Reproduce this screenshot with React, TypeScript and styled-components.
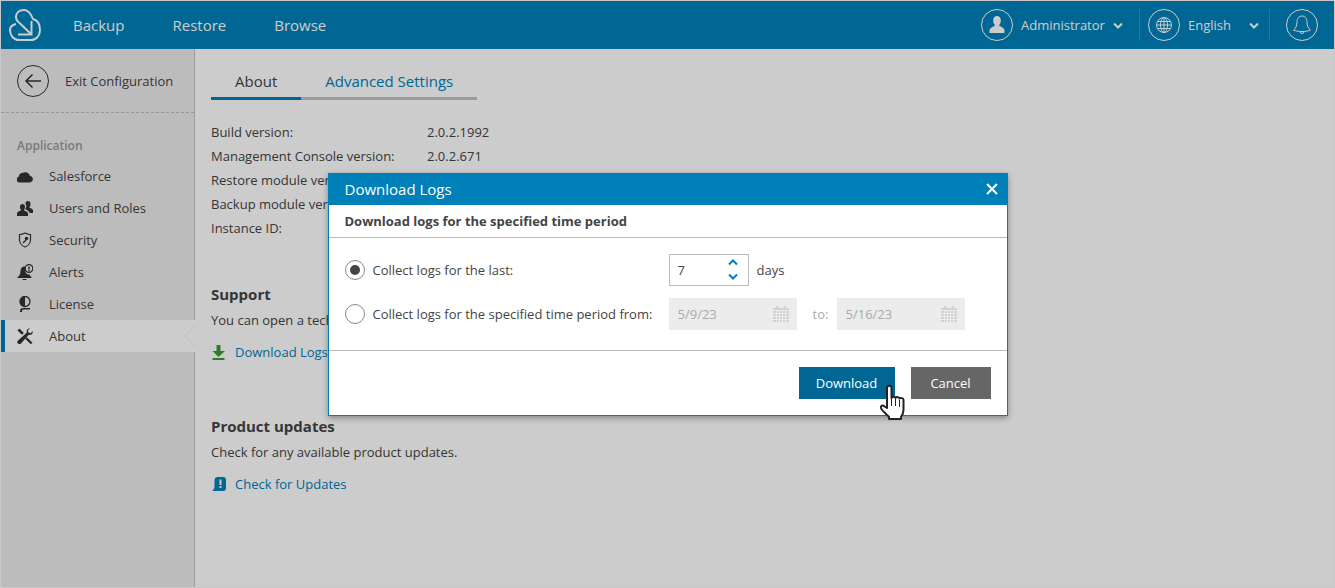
import styled, { createGlobalStyle } from 'styled-components';

const GlobalStyle = createGlobalStyle`
  html, body {
    margin: 0;
    height: 100%;
  }
  body {
    font-family: "Open Sans", "Liberation Sans", sans-serif;
    font-size: 13px;
    color: #444;
    background: #fff;
  }
  #root {
    height: 100%;
  }
`;

const Page = styled.div`
  position: relative;
  box-sizing: border-box;
  height: 100vh;
  border: 1px solid #c8c8c8;
  display: flex;
  flex-direction: column;
  overflow: hidden;
`;

const Header = styled.header`
  flex: none;
  height: 48px;
  background: #0080b9;
  display: flex;
  align-items: center;
  color: #fff;
  padding: 0 16px 0 8px;
`;

const Logo = styled.svg`
  width: 32px;
  height: 32px;
  margin-right: 32px;
`;

const NavLink = styled.a`
  font-size: 15px;
  margin-right: 48px;
`;

const HeaderRight = styled.div`
  margin-left: auto;
  display: flex;
  align-items: center;
  height: 32px;
`;

const HeaderCircle = styled.span<{ $flush?: boolean }>`
  width: 30px;
  height: 30px;
  border: 1px solid #fff;
  border-radius: 50%;
  display: flex;
  align-items: center;
  justify-content: center;
  margin-right: ${(p) => (p.$flush ? 0 : 8)}px;
`;

const HeaderText = styled.span<{ $width: number }>`
  width: ${(p) => p.$width}px;
  font-size: 13px;
`;

const Separator = styled.span<{ $left: number; $right: number }>`
  width: 1px;
  height: 32px;
  background: #2f97c6;
  margin: 0 ${(p) => p.$right}px 0 ${(p) => p.$left}px;
`;

const Body = styled.div`
  flex: 1;
  display: flex;
  min-height: 0;
`;

const Sidebar = styled.aside`
  flex: none;
  box-sizing: border-box;
  width: 194px;
  background: #ececec;
  border-right: 1px solid #c4c4c4;
`;

const ExitRow = styled.div`
  box-sizing: border-box;
  height: 64px;
  display: flex;
  align-items: center;
  gap: 16px;
  padding-left: 16px;
  border-bottom: 1px dashed #bbb;
`;

const BackCircle = styled.span`
  width: 30px;
  height: 30px;
  border: 1px solid #333;
  border-radius: 50%;
  display: flex;
  align-items: center;
  justify-content: center;
`;

const GroupLabel = styled.div`
  font-weight: 600;
  font-size: 12px;
  color: #999;
  padding: 23px 0 0 16px;
  height: 24px;
  line-height: 20px;
`;

const MenuList = styled.div`
  display: flex;
  flex-direction: column;
`;

const MenuItem = styled.div<{ $active?: boolean }>`
  position: relative;
  box-sizing: border-box;
  height: 32px;
  display: flex;
  align-items: center;
  gap: 16px;
  padding-left: ${(p) => (p.$active ? 12 : 16)}px;
  background: ${(p) => (p.$active ? '#fff' : 'transparent')};
  border-left: ${(p) => (p.$active ? '4px solid #0080b9' : 'none')};
  margin-right: ${(p) => (p.$active ? '-1px' : '0')};
`;

const ActiveNotch = styled.svg`
  position: absolute;
  right: 0;
  top: 6px;
  width: 11px;
  height: 20px;
`;

const MenuIcon = styled.svg`
  width: 16px;
  height: 16px;
  flex: none;
`;

const Main = styled.main`
  flex: 1;
  padding-left: 16px;
`;

const Tabs = styled.div`
  display: flex;
  margin-top: 16px;
  height: 35px;
`;

const Tab = styled.div<{ $active?: boolean }>`
  box-sizing: border-box;
  height: 35px;
  padding: 4px 24px 0;
  font-size: 15px;
  line-height: 24px;
  color: ${(p) => (p.$active ? '#444' : '#0080b9')};
  border-bottom: 3px solid ${(p) => (p.$active ? '#0080b9' : '#c4c4c4')};
`;

const InfoGrid = styled.div`
  display: grid;
  grid-template-columns: 216px auto;
  justify-content: start;
  grid-auto-rows: 24px;
  line-height: 24px;
  margin-top: 20px;
`;

const SectionTitle = styled.h3<{ $top: number }>`
  margin: ${(p) => p.$top}px 0 0;
  font-size: 15px;
  font-weight: 700;
  line-height: 24px;
  color: #444;
`;

const Paragraph = styled.p`
  margin: 2px 0 0;
  line-height: 24px;
  white-space: nowrap;
`;

const IconLink = styled.a`
  display: flex;
  align-items: center;
  gap: 8px;
  margin-top: 8px;
  height: 24px;
  color: #0080b9;
`;

const Overlay = styled.div`
  position: absolute;
  inset: -1px;
  background: rgba(0, 0, 0, 0.2);
  display: flex;
  align-items: center;
  justify-content: center;
`;

const Dialog = styled.section`
  box-sizing: border-box;
  width: 680px;
  height: 243px;
  background: #fff;
  border: 1px solid #0080b9;
  box-shadow: 0 2px 6px rgba(0, 0, 0, 0.35);
  display: flex;
  flex-direction: column;
`;

const DialogTitle = styled.div`
  flex: none;
  height: 31px;
  background: #0080b9;
  color: #fff;
  font-size: 15px;
  display: flex;
  align-items: center;
  justify-content: space-between;
  padding: 0 9px 0 16px;
`;

const DialogSubtitle = styled.div`
  flex: none;
  box-sizing: border-box;
  height: 33px;
  padding-left: 16px;
  font-weight: 700;
  font-size: 13px;
  line-height: 33px;
  border-bottom: 1px solid #bbb;
`;

const DialogBody = styled.div`
  flex: none;
  box-sizing: border-box;
  height: 113px;
  padding: 16px 16px 0;
  display: flex;
  flex-direction: column;
  gap: 12px;
  border-bottom: 1px solid #bbb;
`;

const OptionRow = styled.div`
  display: flex;
  align-items: center;
  height: 32px;
`;

const Radio = styled.span<{ $checked?: boolean }>`
  box-sizing: border-box;
  width: 20px;
  height: 20px;
  flex: none;
  border: 1px solid #888;
  border-radius: 50%;
  display: flex;
  align-items: center;
  justify-content: center;
  margin-right: 8px;
  &::after {
    content: '';
    display: ${(p) => (p.$checked ? 'block' : 'none')};
    width: 10px;
    height: 10px;
    border-radius: 50%;
    background: #444;
  }
`;

const OptionLabel = styled.span`
  width: 296px;
  flex: none;
  white-space: nowrap;
`;

const Spinner = styled.div`
  box-sizing: border-box;
  width: 80px;
  height: 32px;
  border: 1px solid #bbb;
  padding: 0 8px;
  display: flex;
  align-items: center;
  justify-content: space-between;
`;

const SpinnerArrows = styled.div`
  display: flex;
  flex-direction: column;
  gap: 7px;
  margin-right: 2px;
`;

const DaysLabel = styled.span`
  margin-left: 8px;
`;

const DateField = styled.div`
  box-sizing: border-box;
  width: 128px;
  height: 32px;
  background: #ececec;
  color: #aaa;
  padding: 0 8px 0 9px;
  display: flex;
  align-items: center;
  justify-content: space-between;
`;

const ToLabel = styled.span`
  color: #aaa;
  width: 24px;
  margin-left: 16px;
  flex: none;
`;

const DialogFooter = styled.div`
  flex: 1;
  display: flex;
  justify-content: flex-end;
  gap: 16px;
  padding: 16px 16px 0 0;
`;

const Button = styled.button<{ $primary?: boolean }>`
  position: relative;
  width: ${(p) => (p.$primary ? 96 : 80)}px;
  height: 32px;
  border: none;
  padding: 0;
  color: #fff;
  font: 400 13px "Open Sans", "Liberation Sans", sans-serif;
  background: ${(p) => (p.$primary ? '#006694' : '#666')};
`;

const HandCursor = styled.svg`
  position: absolute;
  left: 80px;
  top: 17px;
  width: 28px;
  height: 38px;
`;

const CalendarIcon = () => (
  <svg width="16" height="16" viewBox="0 0 16 16">
    <path fill="#d2d2d2" d="M3 0h2v2h6V0h2v2h3v14H0V2h3z" />
    <path
      stroke="#ececec"
      strokeWidth="1"
      fill="none"
      d="M0 4.500h16M0 7.500h16M0 10.500h16M0 13.500h16M3.500 4v12M6.500 4v12M9.500 4v12M12.500 4v12"
    />
  </svg>
);

const Chevron = ({ up, color = '#fff' }: { up?: boolean; color?: string }) => (
  <svg width="10" height="7" viewBox="0 0 10 7">
    <path
      d={up ? 'M1 5.500l4-4 4 4' : 'M1 1.500l4 4 4-4'}
      fill="none"
      stroke={color}
      strokeWidth="2"
    />
  </svg>
);

const menuItems = [
  {
    label: 'Salesforce',
    icon: <path d="M3 14.500a3 3 0 0 1-1-5.900A3.200 3.200 0 0 1 5.500 5 5 5 0 0 1 13 8a3.300 3.300 0 0 1 .3 6.500z" />,
  },
  {
    label: 'Users and Roles',
    icon: (
      <path d="M10.500 1a3 3 0 0 1 3 3.200c0 1.300-.6 2.300-1.300 3 .4.900 3.800 1.200 3.800 3.300V13h-3.500c-.3-2.300-3.300-3-4.300-3.900.8-1 1.100-1.800 1.100-3 0-1-.3-2-1-2.700C8.700 2 9.500 1 10.500 1zM5 4a2.900 2.900 0 0 1 3 3c0 1.300-.5 2.300-1.200 3 .4 1 4.200 1.300 4.200 3.500V16H0v-2.500C0 11.300 3.800 11 4.200 10 3.500 9.300 2.900 8.300 2.900 7A2.900 2.900 0 0 1 5 4z" />
    ),
  },
  {
    label: 'Security',
    icon: (
      <>
        <path
          d="M8 1c2 1 4 1.500 5.500 1.500V8c0 3-2.500 6-5.500 7-3-1-5.500-4-5.500-7V2.500C4 2.500 6 2 8 1z"
          fill="none"
          stroke="#333"
          strokeWidth="1.200"
        />
        <circle cx="9.500" cy="6.500" r="1.800" />
        <path d="M8.500 7.500l-3 3 1 1 3-3z" />
      </>
    ),
  },
  {
    label: 'Alerts',
    icon: (
      <>
        <path d="M7 2.500c-.8 0-3.500.8-3.500 5 0 3-1.500 4.500-3 5.500v1h14v-1c-1-.7-1.500-1.300-2-2.500-3 .5-5.500-3-4-7-.4-.6-.9-1-1.500-1zM5.500 15a2 2 0 0 0 4 0z" />
        <circle cx="12" cy="4.500" r="3.800" fill="none" stroke="#333" strokeWidth="1.300" />
        <path d="M11.300 2.500h1.400v3h-1.400zM11.300 6h1.400v1.200h-1.400z" />
      </>
    ),
  },
  {
    label: 'License',
    icon: (
      <>
        <circle cx="8" cy="5.500" r="5" fill="none" stroke="#333" strokeWidth="1.300" />
        <path d="M8 .5a5 5 0 0 0 0 10z" />
        <path d="M3 15c0-1.800 1.400-3 3.500-3H13v1.500H7c-1 0-2 .4-2 1.500v1H3z" />
      </>
    ),
  },
  {
    label: 'About',
    icon: (
      <path d="M2.500.5L6.800 5 5 6.800.5 2.500zM15.800 3.200c.4 2-1.400 4.300-4 3.600L4 15.500a1.500 1.500 0 0 1-3-3l8.700-7.800C9 2 11 .2 13 .3L10.800 2.500l.7 2 2 .7zM10 9.300l5.500 5.500-1.700 1.400L8.400 11z" />
    ),
    active: true,
  },
];

export default function App() {
  return (
    <>
      <GlobalStyle />
      <Page>
        <Header>
          <Logo viewBox="0 0 32 32" fill="none" stroke="#fff" strokeWidth="2">
            <path d="M7 15C3 16 1 18 1 21c0 6 4 10 9 10h12c5 0 9-4 9-10 0-6-3-10-7-11-2-5-5-9-9-9C10 1 7 4 7 8c0 2 1 4 3 5.500L22 25" />
            <path d="M9 25.500h13.500V12" />
          </Logo>
          <NavLink>Backup</NavLink>
          <NavLink>Restore</NavLink>
          <NavLink>Browse</NavLink>
          <HeaderRight>
            <HeaderCircle>
              <svg width="16" height="18" viewBox="0 0 16 18" fill="#fff">
                <path d="M8 0c2.400 0 3.800 1.800 3.800 4.400 0 2-.8 3.500-1.800 4.600 0 1.400 5.500 2.200 5.500 5.600V17H.5v-2.400C.5 11.200 6 10.400 6 9 5 7.900 4.200 6.400 4.200 4.400 4.200 1.800 5.600 0 8 0z" />
              </svg>
            </HeaderCircle>
            <HeaderText $width={92}>Administrator</HeaderText>
            <Chevron />
            <Separator $left={16} $right={8} />
            <HeaderCircle>
              <svg width="18" height="18" viewBox="0 0 18 18" fill="none" stroke="#fff" strokeWidth="1">
                <circle cx="9" cy="9" r="7.500" />
                <ellipse cx="9" cy="9" rx="3.500" ry="7.500" />
                <path d="M9 1.500v15M2.500 5.500h13M1.500 9h15M2.500 12.500h13" />
              </svg>
            </HeaderCircle>
            <HeaderText $width={61}>English</HeaderText>
            <Chevron />
            <Separator $left={10} $right={16} />
            <HeaderCircle $flush>
              <svg width="18" height="20" viewBox="0 0 18 20" fill="none" stroke="#fff" strokeWidth="1">
                <path d="M9 1C6 1 4 3.500 4 7c0 4-1.500 6.500-3.500 8 2 1 5 1.500 8.500 1.500s6.500-.5 8.500-1.500C15.500 13.500 14 11 14 7c0-3.500-2-6-5-6zM7 16.500a2 2 0 0 0 4 0" />
              </svg>
            </HeaderCircle>
          </HeaderRight>
        </Header>
        <Body>
          <Sidebar>
            <ExitRow>
              <BackCircle>
                <svg width="18" height="16" viewBox="0 0 18 16" fill="none" stroke="#333" strokeWidth="1.500">
                  <path d="M17 8H2M8.500 1.500L2 8l6.500 6.500" />
                </svg>
              </BackCircle>
              <span>Exit Configuration</span>
            </ExitRow>
            <GroupLabel>Application</GroupLabel>
            <MenuList>
              {menuItems.map((item) => (
                <MenuItem key={item.label} $active={item.active}>
                  <MenuIcon viewBox="0 0 16 16" fill="#333">
                    {item.icon}
                  </MenuIcon>
                  {item.label}
                  {item.active && (
                    <ActiveNotch viewBox="0 0 11 20">
                      <path d="M11 0L1 10l10 10z" fill="#fff" />
                      <path d="M11 0L1 10l10 10" fill="none" stroke="#ececec" />
                    </ActiveNotch>
                  )}
                </MenuItem>
              ))}
            </MenuList>
          </Sidebar>
          <Main>
            <Tabs>
              <Tab $active>About</Tab>
              <Tab>Advanced Settings</Tab>
            </Tabs>
            <InfoGrid>
              <span>Build version:</span>
              <span>2.0.2.1992</span>
              <span>Management Console version:</span>
              <span>2.0.2.671</span>
              <span>Restore module version:</span>
              <span />
              <span>Backup module version:</span>
              <span />
              <span>Instance ID:</span>
              <span />
            </InfoGrid>
            <SectionTitle $top={42}>Support</SectionTitle>
            <Paragraph>You can open a technical</Paragraph>
            <IconLink>
              <svg width="16" height="16" viewBox="0 0 16 16" fill="#3c9a36">
                <path d="M5.500 1h4v6H14l-6.500 6L1.500 7h4zM1.500 14h12v2h-12z" />
              </svg>
              Download Logs
            </IconLink>
            <SectionTitle $top={50}>Product updates</SectionTitle>
            <Paragraph>Check for any available product updates.</Paragraph>
            <IconLink>
              <svg width="16" height="16" viewBox="0 0 16 16" fill="#0080b9">
                <path d="M6 1h6a3 3 0 0 1 3 3v8a3 3 0 0 1-3 3H1c1.500-1 2.500-2.500 2.500-5V4A3 3 0 0 1 6 1z" />
                <path fill="#fff" d="M8.500 3.500h2v5.500h-2zM8.500 10h2v2h-2z" />
              </svg>
              Check for Updates
            </IconLink>
          </Main>
        </Body>
        <Overlay>
          <Dialog>
            <DialogTitle>
              Download Logs
              <svg width="12" height="12" viewBox="0 0 12 12" stroke="#fff" strokeWidth="2">
                <path d="M1 1l10 10M11 1L1 11" />
              </svg>
            </DialogTitle>
            <DialogSubtitle>Download logs for the specified time period</DialogSubtitle>
            <DialogBody>
              <OptionRow>
                <Radio $checked />
                <OptionLabel>Collect logs for the last:</OptionLabel>
                <Spinner>
                  <span>7</span>
                  <SpinnerArrows>
                    <Chevron up color="#0080b9" />
                    <Chevron color="#0080b9" />
                  </SpinnerArrows>
                </Spinner>
                <DaysLabel>days</DaysLabel>
              </OptionRow>
              <OptionRow>
                <Radio />
                <OptionLabel>Collect logs for the specified time period from:</OptionLabel>
                <DateField>
                  5/9/23
                  <CalendarIcon />
                </DateField>
                <ToLabel>to:</ToLabel>
                <DateField>
                  5/16/23
                  <CalendarIcon />
                </DateField>
              </OptionRow>
            </DialogBody>
            <DialogFooter>
              <Button $primary>
                Download
                <HandCursor viewBox="0 0 28 38">
                  <path
                    d="M8 3.500C8 1 12.500 1 12.500 3.500V14c1-2 4-1.500 4 0 1-1.500 4-1 4 .5 1.500-1 4-.5 4 1.500v10c0 3-1 5-2.500 7v2H10v-2c-2.500-3-7-6-8-9-.5-2 1.500-3.500 3.500-1.500L8 24z"
                    fill="#fff"
                    stroke="#222"
                    strokeWidth="2"
                    strokeLinejoin="round"
                  />
                  <path d="M12.500 15v7M16.500 15v7M20.500 16v7" stroke="#222" strokeWidth="1" />
                </HandCursor>
              </Button>
              <Button>Cancel</Button>
            </DialogFooter>
          </Dialog>
        </Overlay>
      </Page>
    </>
  );
}
